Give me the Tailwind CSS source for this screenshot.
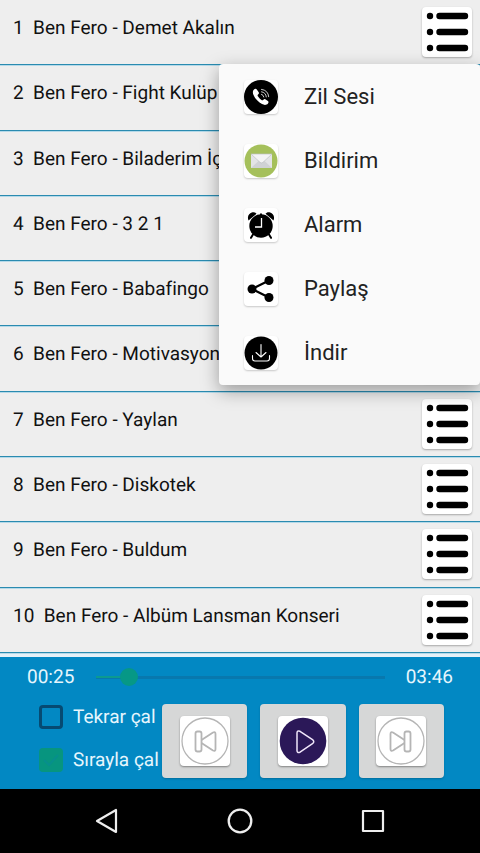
<!DOCTYPE html>
<html lang="tr">
<head>
<meta charset="utf-8">
<meta name="viewport" content="width=device-width, initial-scale=1">
<title>Ben Fero</title>
<script src="https://cdn.jsdelivr.net/npm/@tailwindcss/browser@4"></script>
</head>
<body class="bg-black font-['Roboto',sans-serif] [text-rendering:geometricPrecision]">
<svg class="hidden" aria-hidden="true">
  <symbol id="list" viewBox="0 0 50 50">
    <g stroke="#000" stroke-width="6.4" stroke-linecap="round"><path d="M17.5 9H43M17.5 25H43M17.5 41H43"/></g>
    <circle cx="8" cy="9" r="3.2"/><circle cx="8" cy="25" r="3.2"/><circle cx="8" cy="41" r="3.2"/>
  </symbol>
</svg>
<div class="relative flex min-h-screen flex-col overflow-hidden">
  <main class="relative flex flex-1 flex-col bg-[#e4f1f8] pb-1">
    <ol id="songs" class="flex flex-1 flex-col bg-[#eeeeee]"></ol>

    <div role="menu" class="absolute right-0 top-16 w-[261px] rounded-sm bg-[#fafafa] pt-px text-[22px] leading-6 text-[#222222] shadow-[0_6px_18px_rgba(0,0,0,0.35)]">
      <button role="menuitem" class="flex h-16 w-full items-center gap-[26px] pl-[25px] text-left">
        <svg class="size-[34px] rounded-sm bg-white shadow-[0_1px_2px_rgba(0,0,0,0.2)]" viewBox="0 0 34 34" aria-hidden="true">
          <circle cx="17" cy="17" r="17"/>
          <path fill="#fff" d="M10.2 9.3c1-.9 2-.8 2.6.1l1.900 2.800c.5.8.3 1.500-.4 2.100-.8.700-.9 1.200-.4 2 .9 1.500 2 2.700 3.500 3.700.8.500 1.400.500 2-.2.700-.8 1.400-.9 2.200-.4l2.300 1.700c.8.600.8 1.500.1 2.400-1.500 1.800-3.700 1.800-6 .6-3.800-2-7-5.400-8.600-9.300-.9-2.200-.7-4.200.8-5.500z"/>
          <g fill="none" stroke="#ccc" stroke-width="1" stroke-linecap="round"><path d="M17.500 14.300q2 .5 2.300 2.700M17.500 11.800q4.400.6 4.800 5.100M17.500 9.400q6.600.7 7.200 7.300"/></g>
        </svg>
        <span>Zil Sesi</span>
      </button>
      <button role="menuitem" class="flex h-16 w-full items-center gap-[26px] pl-[25px] text-left">
        <svg class="size-[34px] rounded-sm bg-white shadow-[0_1px_2px_rgba(0,0,0,0.2)]" viewBox="0 0 34 34" aria-hidden="true">
          <circle cx="17" cy="17" r="16.500" fill="#a5c05b"/>
          <path fill="#e3e4e6" d="M7 10h21v14H7z"/>
          <path fill="#d0d2d5" d="M7 24l8-7.500h5l8 7.500z"/>
          <path fill="#f3f3f4" stroke="#bfc1c4" stroke-width=".7" d="M7 10h21l-9 8.300q-1.500 1.200-3 0z"/>
        </svg>
        <span>Bildirim</span>
      </button>
      <button role="menuitem" class="flex h-16 w-full items-center gap-[26px] pl-[25px] text-left">
        <svg class="size-[34px] rounded-sm bg-white shadow-[0_1px_2px_rgba(0,0,0,0.2)]" viewBox="0 0 34 34" aria-hidden="true">
          <path d="M4.500 12.500C2.800 8.500 5 5 8.500 4.300c1.900-.3 3.200.4 4 1.500zM29.500 12.500c1.700-4-.5-7.500-4-8.200-1.900-.3-3.200.4-4 1.500z"/>
          <circle cx="17" cy="18" r="11.700"/>
          <path d="M16 5.500h2V8h-2z"/>
          <path fill="none" stroke="#000" stroke-width="2" stroke-linecap="round" d="M9 26.500L7 29.800M25 26.500l2 3.300"/>
          <path fill="none" stroke="#fff" stroke-width="1.300" d="M17.500 10v9h-6.500"/>
        </svg>
        <span>Alarm</span>
      </button>
      <button role="menuitem" class="flex h-16 w-full items-center gap-[26px] pl-[25px] text-left">
        <svg class="size-[34px] rounded-sm bg-white shadow-[0_1px_2px_rgba(0,0,0,0.2)]" viewBox="0 0 34 34" aria-hidden="true">
          <path fill="none" stroke="#000" stroke-width="2.200" d="M25 8.500L8 17l17 8.500"/>
          <circle cx="25" cy="8.500" r="4.500"/><circle cx="8" cy="17" r="4.500"/><circle cx="25" cy="25.500" r="4.500"/>
        </svg>
        <span>Paylaş</span>
      </button>
      <button role="menuitem" class="flex h-16 w-full items-center gap-[26px] pl-[25px] text-left">
        <svg class="size-[34px] rounded-sm bg-white shadow-[0_1px_2px_rgba(0,0,0,0.2)]" viewBox="0 0 34 34" aria-hidden="true">
          <circle cx="17" cy="17" r="16.500"/>
          <path fill="none" stroke="#fff" stroke-width="1.100" stroke-linecap="round" stroke-linejoin="round" d="M17 8.500v12.500M12 16.500l5 4.500 5-4.500M8.500 19.500v3q0 2.500 2.500 2.500h12q2.500 0 2.500-2.500v-3"/>
        </svg>
        <span>İndir</span>
      </button>
    </div>
  </main>

  <section aria-label="Oynatıcı" class="bg-[#0288c3] pb-[11px] text-[19px] leading-6 text-[#e6f6fd]">
    <div class="flex items-center pb-3 pl-[27px] pr-[27px] pt-2">
      <span class="w-[69px]">00:25</span>
      <input type="range" aria-label="Konum" min="0" max="226" value="20" class="h-[18px] min-w-0 flex-1 appearance-none bg-[linear-gradient(#0c9a90,#0c9a90),linear-gradient(#0878ae,#0878ae)] bg-[length:28px_2px,100%_3px] bg-[position:left_center,center] bg-no-repeat [&::-webkit-slider-thumb]:size-[18px] [&::-webkit-slider-thumb]:appearance-none [&::-webkit-slider-thumb]:rounded-full [&::-webkit-slider-thumb]:bg-[#069886]">
      <span class="w-[68px] text-right">03:46</span>
    </div>
    <div class="flex items-start pl-[39px] pr-9 pt-[3px]">
      <div class="flex w-[123px] shrink-0 flex-col gap-[19px] pt-px">
        <label class="flex items-center gap-[10px] whitespace-nowrap"><input type="checkbox" class="size-6 shrink-0 appearance-none rounded-sm border-[3px] border-[#064a72]">Tekrar çal</label>
        <label class="flex items-center gap-[10px] whitespace-nowrap"><span class="grid size-6 shrink-0"><input type="checkbox" checked class="col-start-1 row-start-1 size-6 appearance-none rounded-sm bg-[#07957f]"><svg class="pointer-events-none col-start-1 row-start-1 size-6" viewBox="0 0 24 24" fill="none" stroke="#078f8c" stroke-width="2" aria-hidden="true"><path d="M5 12l5 5 9-10"/></svg></span>Sırayla çal</label>
      </div>
      <div class="grid flex-1 grid-cols-3 gap-[13px]">
        <button aria-label="Önceki" class="flex h-[74px] items-center justify-center rounded-sm bg-[#d6d7d7] shadow-[0_1px_2px_rgba(0,0,0,0.2)]">
          <svg class="size-[50px] rounded-sm bg-white shadow-[0_1px_2px_rgba(0,0,0,0.4)]" viewBox="0 0 50 50" fill="none" stroke="#b5b5b5" stroke-width="1.800" stroke-linejoin="round" aria-hidden="true">
            <circle cx="25" cy="25" r="23" stroke-width="1.300"/><rect x="15.500" y="15.500" width="6" height="20" rx="2"/><path d="M21.500 24l11.500-7.500q2.500-1 2.500 1.500v15q0 2.500-2.500 1.500L21.500 27"/>
          </svg>
        </button>
        <button aria-label="Oynat" class="flex h-[74px] items-center justify-center rounded-sm bg-[#d6d7d7] shadow-[0_1px_2px_rgba(0,0,0,0.2)]">
          <svg class="size-[50px] rounded-sm bg-white shadow-[0_1px_2px_rgba(0,0,0,0.4)]" viewBox="0 0 50 50" aria-hidden="true">
            <circle cx="25" cy="25" r="23.300" fill="#2b1858"/><path fill="none" stroke="#f0e6fa" stroke-width="1.500" stroke-linejoin="round" d="M19 17v17.500q0 3 3 1.700l12.500-8.500q2.500-2 0-4L22 15.300q-3-1.300-3 1.700z"/>
          </svg>
        </button>
        <button aria-label="Sonraki" class="flex h-[74px] items-center justify-center rounded-sm bg-[#d6d7d7] shadow-[0_1px_2px_rgba(0,0,0,0.2)]">
          <svg class="size-[50px] rounded-sm bg-white shadow-[0_1px_2px_rgba(0,0,0,0.4)]" viewBox="0 0 50 50" fill="none" stroke="#b5b5b5" stroke-width="1.800" stroke-linejoin="round" aria-hidden="true">
            <circle cx="25" cy="25" r="23" stroke-width="1.300"/><rect x="28.500" y="15.500" width="6" height="20" rx="2"/><path d="M28.500 24L17 16.500q-2.500-1-2.500 1.500v15q0 2.500 2.500 1.500L28.500 27"/>
          </svg>
        </button>
      </div>
    </div>
  </section>

  <nav class="flex h-16 items-center justify-center gap-[107px] bg-black">
    <button aria-label="Geri"><svg class="size-[26px]" viewBox="0 0 26 26" fill="none" stroke="#eee" stroke-width="2.200" stroke-linejoin="round" aria-hidden="true"><path d="M22 2v22L3 13z"/></svg></button>
    <button aria-label="Ana ekran"><svg class="size-[26px]" viewBox="0 0 26 26" fill="none" stroke="#eee" stroke-width="2.300" aria-hidden="true"><circle cx="13" cy="13" r="11.300"/></svg></button>
    <button aria-label="Son uygulamalar"><svg class="size-[26px]" viewBox="0 0 26 26" fill="none" stroke="#eee" stroke-width="2.200" stroke-linejoin="round" aria-hidden="true"><path d="M3 3h20v20H3z"/></svg></button>
  </nav>
</div>
<script>
  const songs = ['Demet Akalın', 'Fight Kulüp', 'Biladerim İçin', '3 2 1', 'Babafingo', 'Motivasyon', 'Yaylan', 'Diskotek', 'Buldum', 'Albüm Lansman Konseri'];
  document.getElementById('songs').innerHTML = songs.map((title, i) => `
    <li class="flex min-h-16 flex-1 items-start justify-between border-b border-[#2a8bb0] pl-[13px] pr-2 shadow-[0_1px_0_#b5d9e8]">
      <span class="whitespace-pre pt-4 text-[19px] leading-6 text-[#111111]">${i + 1}  Ben Fero - ${title}</span>
      <button aria-label="${title} seçenekleri" class="mt-[7px] size-[50px] rounded-sm bg-white shadow-[0_1px_2px_rgba(0,0,0,0.3)]"><svg class="size-full"><use href="#list"/></svg></button>
    </li>`).join('');
</script>
</body>
</html>
